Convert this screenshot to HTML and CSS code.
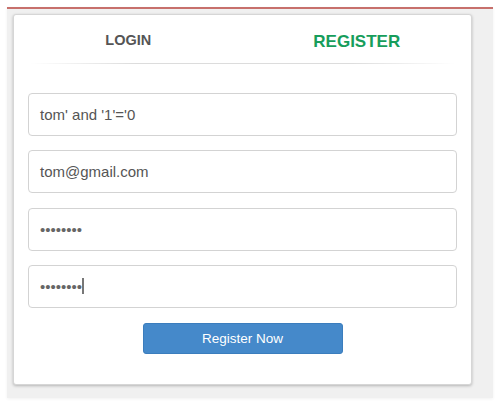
FILE: index.html
```html
<!DOCTYPE html>
<html>
<head>
<meta charset="utf-8">
<link rel="stylesheet" href="styles.css">
</head>
<body>
<div class="frame">
  <div class="card">
    <div class="tabs">
      <div class="tab tab-login">LOGIN</div>
      <div class="tab tab-register">REGISTER</div>
    </div>
    <div class="divider"></div>
    <form class="form">
      <div class="field">tom' and '1'='0</div>
      <div class="field">tom@gmail.com</div>
      <div class="field dots">••••••••</div>
      <div class="field dots">••••••••<span class="caret"></span></div>
      <div class="actions"><button type="button" class="btn">Register Now</button></div>
    </form>
  </div>
</div>
</body>
</html>
```
FILE: styles.css
```css
html, body { margin: 0; padding: 0; background: #fff; }
body {
  padding: 7px 7px 3px 7px;
  font-family: "Liberation Sans", Arial, sans-serif;
}
.frame {
  border-top: 2px solid #c7706c;
  background: #f0f0f0;
  padding: 5px 21px 13px 6px;
  box-shadow: 0 1px 3px rgba(0,0,0,0.06);
}
.card {
  background: #fff;
  border: 1px solid #d6d6d6;
  border-radius: 3px;
  box-shadow: 0 1px 3px rgba(0,0,0,0.25);
  height: 369px;
}
.tabs {
  display: grid;
  grid-template-columns: 1fr 1fr;
  height: 48px;
  align-items: start;
  text-align: center;
  font-weight: bold;
}
.tab { line-height: 20px; }
.tab-login { font-size: 14.5px; color: #555; padding-top: 15px; }
.tab-register { font-size: 17px; color: #179d5b; padding-top: 17px; }
.divider {
  height: 1px;
  margin: 0 16px;
  background: linear-gradient(to right, rgba(220,220,220,0), #dcdcdc 25%, #dcdcdc 75%, rgba(220,220,220,0));
}
.form {
  padding: 29px 14px 0 14px;
  display: flex;
  flex-direction: column;
  gap: 14.3px;
}
.field {
  height: 43px;
  box-sizing: border-box;
  border: 1px solid #d3d3d3;
  border-radius: 4px;
  padding: 0 11px;
  display: flex;
  align-items: center;
  font-size: 15px;
  color: #555;
}
.dots { color: #666; }
.caret {
  display: inline-block;
  width: 1.5px;
  height: 16px;
  background: #777;
}
.actions {
  display: flex;
  justify-content: center;
  padding-top: 1px;
}
.btn {
  width: 200px;
  height: 31px;
  background: #4589ca;
  border: 1px solid #3b7dbd;
  border-radius: 3px;
  color: #fff;
  font-family: "Liberation Sans", Arial, sans-serif;
  font-size: 13.5px;
  padding: 0;
}
```
